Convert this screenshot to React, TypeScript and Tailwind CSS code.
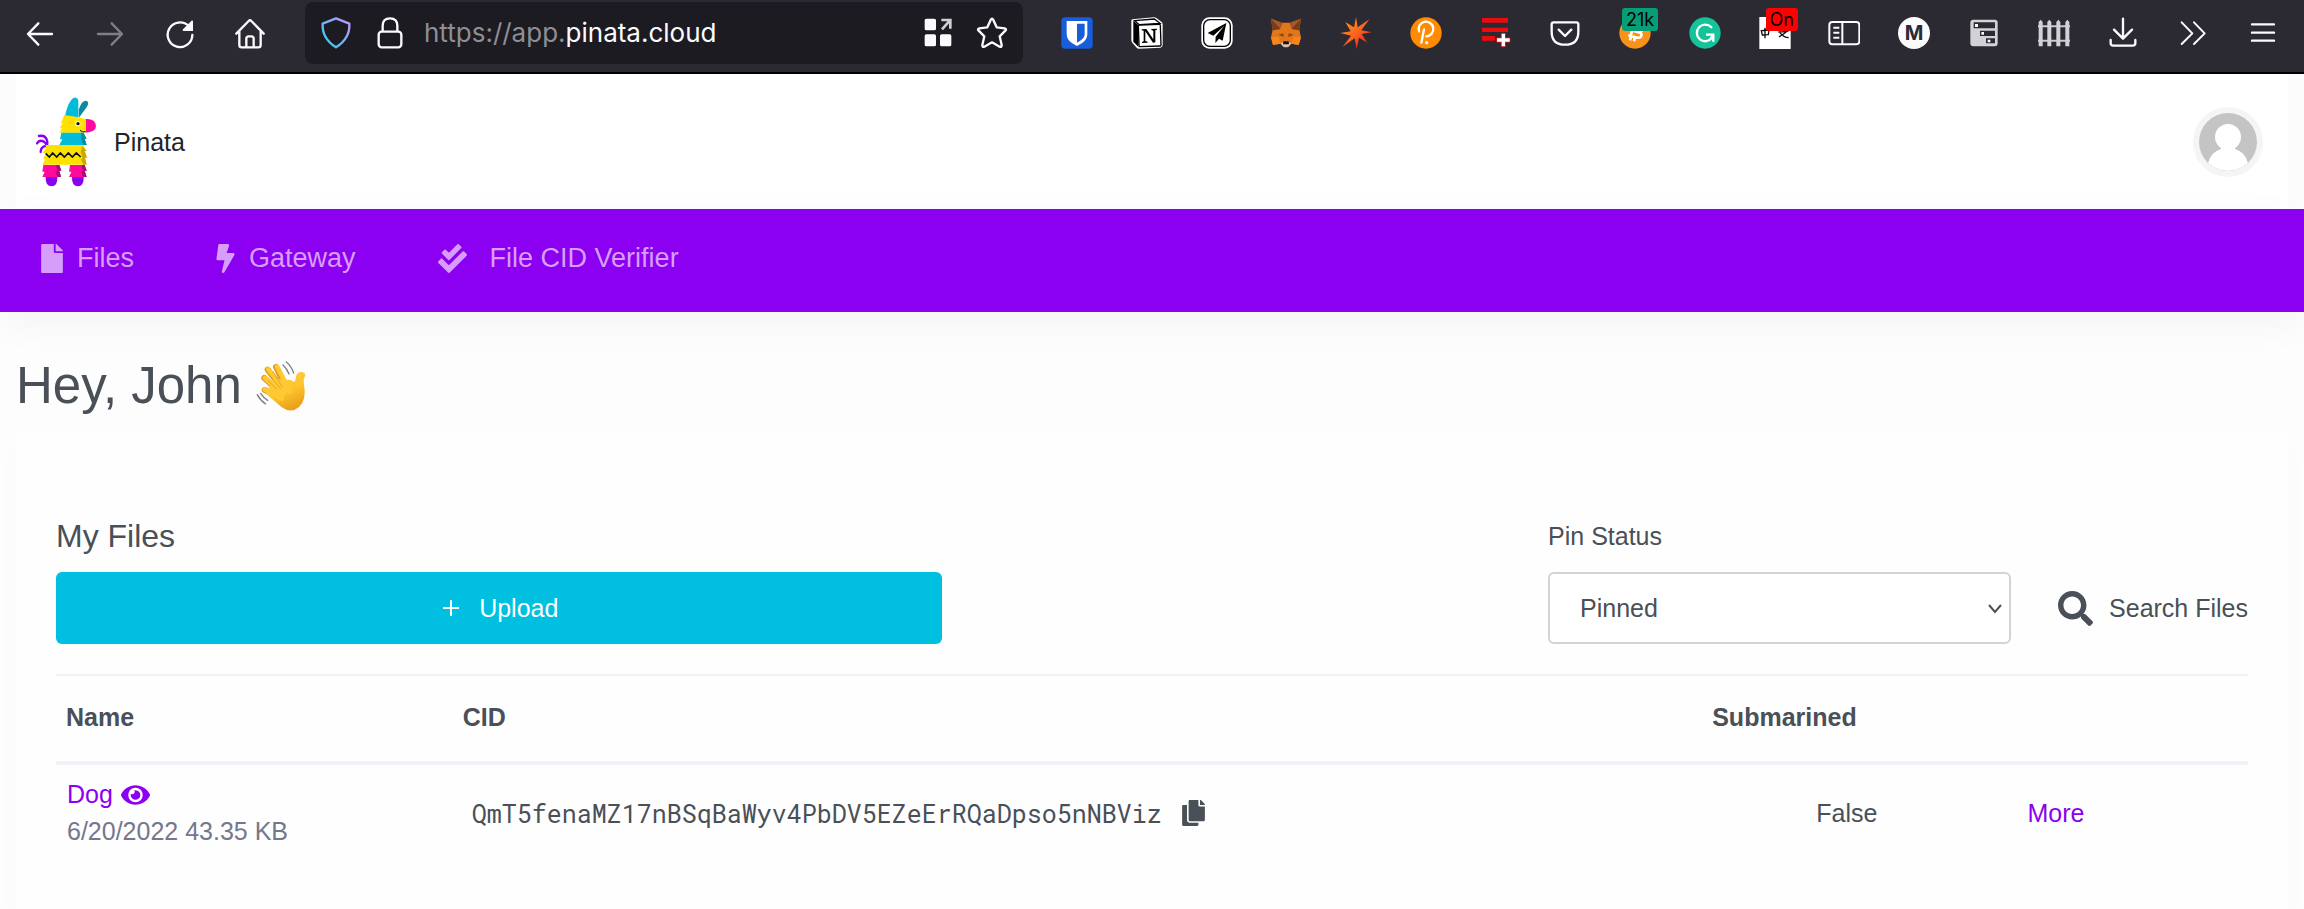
import type { ReactNode } from "react";
import { FaBolt, FaCheckDouble, FaCopy, FaEye, FaFile, FaSearch } from "react-icons/fa";

type IconProps = { children: ReactNode; box?: string };

function Icon({ children, box = "0 0 96 96" }: IconProps) {
  return (
    <svg viewBox={box} className="size-8 shrink-0" fill="none" aria-hidden="true">
      {children}
    </svg>
  );
}

function Line({ d, color = "#fbfbfe", width = 7 }: { d: string; color?: string; width?: number }) {
  return <path d={d} stroke={color} strokeWidth={width} strokeLinecap="round" strokeLinejoin="round" />;
}

const navButtons: { label: string; icon: ReactNode }[] = [
  { label: "Back", icon: <Icon><Line d="M84 51H13M43 19L12 51L43 83" /></Icon> },
  { label: "Forward", icon: <Icon><Line color="#807f86" d="M12 51H83M53 19L84 51L53 83" /></Icon> },
  {
    label: "Reload",
    icon: (
      <Icon>
        <Line d="M74 27A37 37 0 1 0 85 54" />
        <path d="M87 13V42H59C56 42 55 39 57 37L82 12C84 10 87 10 87 13Z" fill="#fbfbfe" />
      </Icon>
    ),
  },
  {
    label: "Home",
    icon: (
      <Icon>
        <Line d="M7 50L44 12Q48 8 52 12L89 50M16 42V84Q16 91 23 91H73Q80 91 80 84V42M37 90V65Q37 58 44 58H52Q59 58 59 65V90" />
      </Icon>
    ),
  },
];

const extensions: { label: string; icon: ReactNode; badge?: string; badgeClass?: string }[] = [
  {
    label: "Bitwarden",
    icon: (
      <Icon>
        <rect x="1" y="1" width="94" height="94" rx="12" fill="#175ddc" />
        <path d="M17 12H79V51C79 69 65 78 48 87C31 78 17 69 17 51Z" fill="#fff" />
        <path d="M48 20H71V51C71 63 60 70 48 77Z" fill="#175ddc" />
      </Icon>
    ),
  },
  {
    label: "Notion",
    icon: (
      <Icon>
        <path d="M4 7L69 1Q73 1 76 3L92 15Q95 18 95 22V84Q95 91 88 92L24 95Q19 95 17 92L4 77Q1 74 1 69V12Q1 8 4 7Z" fill="#fff" />
        <path d="M7 11L22 24V89L7 74Z" fill="#000" />
        <path d="M11 11L70 6L87 19L25 23Z" stroke="#000" strokeWidth="4" />
        <rect x="23" y="23" width="66" height="65" rx="3" stroke="#000" strokeWidth="4" transform="rotate(-2 56 55)" />
        <path d="M32 37L46 36L67 67V41L61 39V36L78 35V38L73 40V76L66 77L43 43V72L50 74V77L33 78V75L38 73V41L32 40Z" fill="#000" />
      </Icon>
    ),
  },
  {
    label: "Paper plane",
    icon: (
      <Icon>
        <rect x="1" y="1" width="94" height="94" rx="24" fill="#fff" />
        <rect x="8" y="8" width="80" height="80" rx="18" fill="#fff" stroke="#000" strokeWidth="4" />
        <path d="M76 18L20 48L37 56L70 26L44 59L43 78L54 65L65 71Z" fill="#000" />
      </Icon>
    ),
  },
  {
    label: "MetaMask",
    icon: (
      <Icon>
        <path d="M3 5L35 17H60L93 5L88 39L93 61L86 84L64 80L54 90H41L31 80L9 84L3 61L8 39Z" fill="#e2761b" />
        <path d="M3 5L37 18L29 37L8 40Z" fill="#763d16" />
        <path d="M93 5L59 18L67 37L88 40Z" fill="#763d16" />
        <path d="M3 5L35 17L30 34Z" fill="#a9572b" />
        <path d="M93 5L61 17L66 34Z" fill="#a9572b" />
        <path d="M3 61L26 59L31 80L9 84ZM93 61L70 59L65 80L86 84Z" fill="#f6851b" />
        <path d="M25 53L40 49L41 60ZM71 53L56 49L55 60Z" fill="#8a4519" />
        <path d="M32 79L42 74H54L64 79L56 89Q48 92 40 89Z" fill="#d7c1b3" />
        <path d="M40 73H56L57 82H39Z" fill="#161616" />
      </Icon>
    ),
  },
  {
    label: "Spark",
    icon: (
      <Icon>
        <defs>
          <linearGradient id="spark" x1="10" y1="10" x2="80" y2="85" gradientUnits="userSpaceOnUse">
            <stop stopColor="#ff9a1f" />
            <stop offset="0.6" stopColor="#fb5b1d" />
            <stop offset="1" stopColor="#e0201b" />
          </linearGradient>
        </defs>
        <path d="M48 0L53 31L88 7L64 40L95 46L65 51L82 77L57 62L50 96L44 64L8 89L33 56L1 48L32 43L16 15L42 31Z" fill="url(#spark)" />
      </Icon>
    ),
  },
  {
    label: "Polkadot",
    icon: (
      <Icon>
        <circle cx="48" cy="48" r="47" fill="#ff8c00" />
        <Line color="#fff" d="M27 43A22 22 0 1 1 49 58M42 37L34 77" />
        <circle cx="50" cy="77" r="5" fill="#fff" />
      </Icon>
    ),
  },
  {
    label: "Add to list",
    icon: (
      <Icon>
        <path d="M6 3H84V17H6ZM6 32H84V45H6ZM6 57H45V71H6Z" fill="#e90c0c" />
        <path d="M70 48V90M49 69H91" stroke="#e90c0c" strokeWidth="15" />
        <path d="M70 50V88M51 69H89" stroke="#fff" strokeWidth="10" />
      </Icon>
    ),
  },
  {
    label: "Pocket",
    icon: <Icon><Line d="M14 16H82Q88 16 88 22V44Q88 83 48 83Q8 83 8 44V22Q8 16 14 16ZM29 38L48 57L67 38" /></Icon>,
  },
  {
    label: "Bitcoin",
    badge: "21k",
    badgeClass: "left-[3px] bg-[#059e76]",
    icon: (
      <Icon>
        <circle cx="48" cy="48" r="47" fill="#f7931a" />
        <path d="M34 22L61 29C72 32 71 43 61 46C71 50 69 64 55 62L28 55M44 26L35 57M45 42L61 46M42 14L39 25M54 17L51 28M36 57L33 70M48 60L45 73" stroke="#fff" strokeWidth="8" />
      </Icon>
    ),
  },
  {
    label: "Grammarly",
    icon: (
      <Icon>
        <circle cx="48" cy="48" r="47" fill="#15c39a" />
        <path d="M67 31A25 25 0 1 0 69 62" stroke="#fff" strokeWidth="7" strokeLinecap="round" />
        <path d="M51 53H73V74M73 53L64 66" stroke="#fff" strokeWidth="7" />
      </Icon>
    ),
  },
  {
    label: "Chinese dictionary",
    badge: "On",
    badgeClass: "left-[7px] bg-[#ff0000]",
    icon: (
      <Icon>
        <rect x="1" width="94" height="96" fill="#fff" />
        <path d="M7 41L30 39L28 53L10 54ZM18 32V64M58 45L88 43M72 36L74 43M82 45L60 60M63 47Q74 62 89 62" stroke="#111" strokeWidth="4" />
      </Icon>
    ),
  },
  {
    label: "Sidebar",
    icon: (
      <Icon>
        <rect x="4" y="15" width="90" height="67" rx="9" stroke="#fbfbfe" strokeWidth="6" />
        <path d="M43 15V82M16 32H34M16 47H34M16 62H34" stroke="#fbfbfe" strokeWidth="6" />
      </Icon>
    ),
  },
  {
    label: "Momentum",
    icon: (
      <span className="flex size-8 items-center justify-center rounded-full bg-[#fbfbfe] text-[20px] leading-8 font-bold text-[#2b2a33]">
        M
      </span>
    ),
  },
  {
    label: "Containers",
    icon: (
      <Icon>
        <rect x="7" y="8" width="82" height="80" rx="9" fill="#d2d2d6" />
        <path d="M17 16H81V34H17ZM36 41H81V57H36ZM54 64H81V79H54Z" fill="#2b2a33" />
        <path d="M21 21H30V30H21ZM40 45H48V53H40ZM59 68H67V76H59Z" fill="#fbfbfe" />
      </Icon>
    ),
  },
  {
    label: "Fence",
    icon: (
      <Icon>
        <path d="M0 28H96M0 71H96" stroke="#c9c9cd" strokeWidth="6" />
        <path d="M2 88V15L8 8L14 15V88ZM28 88V15L34 8L40 15V88ZM55 88V15L61 8L67 15V88ZM82 88V15L88 8L94 15V88Z" fill="#d2d2d6" />
      </Icon>
    ),
  },
  {
    label: "Downloads",
    icon: <Icon><Line d="M48 5V61M21 38L48 65L75 38M11 69V78Q11 86 19 86H77Q85 86 85 78V69" /></Icon>,
  },
  {
    label: "More tools",
    icon: <Icon><Line width={6} d="M14 16L46 49L14 81M51 16L83 49L51 81" /></Icon>,
  },
  {
    label: "Menu",
    icon: <Icon><Line d="M15 22H81M15 47H81M15 71H81" /></Icon>,
  },
];

function BrowserBar() {
  return (
    <div className="flex h-[74px] shrink-0 items-center border-b-2 border-black bg-[#2b2a33] pt-[2px] pr-[25px] pb-[8px] pl-6 font-['Inter',sans-serif]">
      <div className="flex gap-[38px]">
        {navButtons.map((b) => (
          <button key={b.label} type="button" aria-label={b.label}>
            {b.icon}
          </button>
        ))}
      </div>
      <div className="ml-[39px] flex h-[62px] w-[718px] shrink-0 items-center rounded-lg bg-[#1c1b22] px-[15px]">
        <Icon>
          <defs>
            <linearGradient id="shield" x1="10" y1="80" x2="80" y2="20" gradientUnits="userSpaceOnUse">
              <stop stopColor="#2fd0f5" />
              <stop offset="1" stopColor="#b39bf8" />
            </linearGradient>
          </defs>
          <path d="M48 4L88 20Q91 64 48 91Q5 64 8 20Z" stroke="url(#shield)" strokeWidth="7" strokeLinejoin="round" />
        </Icon>
        <span className="ml-[22px] flex">
          <Icon>
            <rect x="14" y="44" width="68" height="47" rx="9" stroke="#fbfbfe" strokeWidth="7" />
            <path d="M26 44V26Q26 4 48 4Q70 4 70 26V44" stroke="#fbfbfe" strokeWidth="7" />
          </Icon>
        </span>
        <p className="ml-[18px] flex-1 text-[26px] leading-8 text-[#8f8e96]">
          https://app.<span className="text-[#fbfbfe]">pinata.cloud</span>
        </p>
        <button type="button" aria-label="Page actions">
          <Icon>
            <path d="M8 10Q8 5 13 5H37Q42 5 42 10V35Q42 40 37 40H13Q8 40 8 35ZM8 57Q8 52 13 52H37Q42 52 42 57V83Q42 88 37 88H13Q8 88 8 83ZM54 57Q54 52 59 52H83Q88 52 88 57V83Q88 88 83 88H59Q54 88 54 83Z" fill="#fbfbfe" />
            <path d="M58 9H85V35M84 10L60 37" stroke="#cfcfd3" strokeWidth="8" />
          </Icon>
        </button>
        <button type="button" aria-label="Bookmark this page" className="ml-[22px]">
          <Icon>
            <Line d="M48 5Q50 5 52 9L62 31L86 34Q93 36 88 41L71 58L77 84Q77 92 71 89L48 76L25 89Q19 92 19 84L25 58L8 41Q3 36 10 34L34 31L44 9Q46 5 48 5Z" />
          </Icon>
        </button>
      </div>
      <div className="ml-[38px] flex flex-1 justify-between">
        {extensions.map((e) => (
          <button key={e.label} type="button" aria-label={e.label} className="relative">
            {e.icon}
            {e.badge && (
              <span className={`absolute -top-[9px] rounded-[3px] px-[4px] text-[18px] leading-[23px] text-black ${e.badgeClass}`}>
                {e.badge}
              </span>
            )}
          </button>
        ))}
      </div>
    </div>
  );
}

function PinataLogo() {
  return (
    <svg viewBox="48 53 180 270" className="h-[90px] w-[60px]" fill="none" aria-hidden="true">
      <path d="M57 170Q74 166 80 180Q84 190 80 202M51 192Q58 180 72 187Q79 191 80 198M62 218Q62 203 76 200" stroke="#8a00f0" strokeWidth="7" strokeLinecap="round" />
      <path d="M176 92Q184 64 198 64Q210 66 200 84L176 116Z" fill="#0b8ba0" />
      <path d="M135 110Q144 66 160 56Q170 51 175 62V114Z" fill="#00bcd9" />
      <path d="M197 119Q226 117 228 140Q227 158 197 160Z" fill="#ff0a9c" />
      <path d="M133 107L175 114L197 120V160H118L127 147H119L128 131H123Z" fill="#ffe100" />
      <path d="M180 153Q187 160 197 157" stroke="#111" strokeWidth="3" />
      <circle cx="173" cy="133" r="8" fill="#fff" />
      <circle cx="174" cy="133" r="5" fill="#111" />
      <path d="M124 160H190L200 178H194L200 197H118L127 180H120Z" fill="#00bcd9" />
      <path d="M184 160H190L200 178H194L200 197H190L184 180Z" fill="#0b8ba0" />
      <path d="M77 197H190L200 215H194L201 235H195L200 256H67L76 240H69L79 221H68L78 207Z" fill="#ffe100" />
      <path d="M186 200L200 215H194L201 235H195L200 256H190L182 238H188L182 218Z" fill="#c9a800" />
      <path d="M77 222L88 233L98 221L110 233L121 221L133 233L145 221L157 233L169 221L182 233" stroke="#111" strokeWidth="5" />
      <path d="M70 257H118L124 274H118L123 293H67L74 277H67ZM150 257H194L200 274H194L200 293H147L154 277H147Z" fill="#ff0a9c" />
      <path d="M108 257H118L124 274H118L123 293H112L106 275H112ZM184 257H194L200 274H194L200 293H189L183 275H189Z" fill="#a80d76" />
      <path d="M77 293H112Q113 321 95 321Q76 321 77 293ZM156 293H191Q192 321 174 321Q155 321 156 293Z" fill="#8a00f0" />
    </svg>
  );
}

function WavingHand() {
  return (
    <svg viewBox="45 55 150 150" className="size-[50px]" fill="none" role="img" aria-label="Waving hand">
      <defs>
        <linearGradient id="hand" x1="90" y1="70" x2="150" y2="205" gradientUnits="userSpaceOnUse">
          <stop stopColor="#ffd24d" />
          <stop offset="0.6" stopColor="#fdc42c" />
          <stop offset="1" stopColor="#ea9d17" />
        </linearGradient>
      </defs>
      <path d="M143 150L105 73M128 142L80 81M120 150L70 106M122 164L71 142" stroke="#e39a1b" strokeWidth="18" strokeLinecap="round" />
      <path d="M96 108L150 112Q162 124 164 108Q164 91 178 88Q192 87 193 97L188 112Q189 128 191 144Q193 188 160 202Q140 207 122 194L76 154Z" fill="url(#hand)" />
      <path d="M147 146L108 72M134 146L82 80M126 154L72 106M122 168L72 141" stroke="#ffc931" strokeWidth="14" strokeLinecap="round" />
      <path d="M96 87L124 133M84 96L118 137M82 115L108 140" stroke="#d98f1a" strokeWidth="2" strokeLinecap="round" />
      <path d="M126 67Q138 78 144 94M136 58Q151 70 158 91M59 152Q66 164 80 173M49 156Q58 174 74 184" stroke="#7d8187" strokeWidth="4" strokeLinecap="round" />
    </svg>
  );
}

function Header() {
  return (
    <header className="bg-[#fcfcfc] px-4">
      <div className="flex items-center justify-between bg-white pt-[23px] pr-[25px] pb-[22px] pl-[20px]">
        <a href="#home" className="flex items-center gap-[18px] text-[25px] leading-[37px] text-[#212529]">
          <PinataLogo />
          Pinata
        </a>
        <button type="button" aria-label="Account" className="rounded-full bg-[#f5f5f5] p-[6px]">
          <svg viewBox="0 0 58 58" className="size-[58px] rounded-full" aria-hidden="true">
            <rect width="58" height="58" fill="#c4c4c4" />
            <ellipse cx="29" cy="24" rx="13" ry="13" fill="#fff" />
            <path d="M22 32H36V36Q46 39 49 50Q40 58 29 58Q18 58 9 50Q12 39 22 36Z" fill="#fff" />
          </svg>
        </button>
      </div>
    </header>
  );
}

function MainNav() {
  const link = "flex items-center text-[27px] leading-[42px] text-[#d69efa]";
  return (
    <nav className="flex bg-[#8b00f0] pt-7 pb-[33px] pl-[41px] shadow-[0_12px_40px_rgba(18,38,63,0.04)]">
      <a href="#files" className={`${link} gap-[14px]`}>
        <FaFile className="h-[29px] w-[22px]" />
        Files
      </a>
      <a href="#gateway" className={`${link} ml-[82px] gap-[14px]`}>
        <FaBolt className="h-[29px] w-[19px]" />
        Gateway
      </a>
      <a href="#verifier" className={`${link} ml-[82px] gap-[23px]`}>
        <FaCheckDouble className="size-[29px]" />
        File CID Verifier
      </a>
    </nav>
  );
}

const files = [
  {
    name: "Dog",
    date: "6/20/2022",
    size: "43.35 KB",
    cid: "QmT5fenaMZ17nBSqBaWyv4PbDV5EZeErRQaDpso5nNBViz",
    submarined: "False",
  },
];

function FilesCard() {
  return (
    <section className="flex-1 bg-[#fefefe] px-10 pt-[85px] pb-11 shadow-[0_12px_36px_rgba(18,38,63,0.015)]">
      <div className="flex items-end justify-between">
        <div className="flex w-[40.4%] flex-col gap-4">
          <h2 className="text-[32px] leading-[40px]">My Files</h2>
          <button type="button" className="flex h-[72px] items-center justify-center gap-5 rounded-md bg-[#00bfe1] pl-1 text-white">
            <svg viewBox="0 0 16 16" className="size-4" aria-hidden="true">
              <path d="M8 0V16M0 8H16" stroke="currentColor" strokeWidth="2" />
            </svg>
            Upload
          </button>
        </div>
        <div className="flex items-end gap-[47px]">
          <div className="flex w-[463px] flex-col gap-4">
            <label htmlFor="pin-status" className="leading-[40px]">
              Pin Status
            </label>
            <div className="relative">
              <select id="pin-status" className="h-[72px] w-full appearance-none rounded-md border-2 border-[#ced4da] bg-white px-[30px]">
                <option>Pinned</option>
                <option>Unpinned</option>
              </select>
              <svg viewBox="0 0 14 10" className="pointer-events-none absolute top-8 right-[9px] h-[10px] w-[14px]" fill="none" aria-hidden="true">
                <path d="M1 1L7 8L13 1" stroke="currentColor" strokeWidth="2" />
              </svg>
            </div>
          </div>
          <button type="button" className="flex h-[72px] items-center gap-4">
            <FaSearch className="size-[35px]" />
            Search Files
          </button>
        </div>
      </div>
      <table className="mt-[30px] w-full table-fixed border-t-2 border-[#eff2f7] text-left">
        <thead>
          <tr className="border-b-4 border-[#eff2f7]">
            <th className="w-[18.1%] px-[10px] pt-[23px] pb-[25px]">Name</th>
            <th className="w-[57%] px-[10px] pt-[23px] pb-[25px]">CID</th>
            <th className="w-[13.2%] px-[10px] pt-[23px] pb-[25px]">Submarined</th>
            <th className="px-[10px]" aria-label="Actions" />
          </tr>
        </thead>
        <tbody>
          {files.map((f) => (
            <tr key={f.cid}>
              <td className="p-[11px]">
                <a href="#dog" className="flex items-center gap-2 text-[#8b00f0]">
                  {f.name}
                  <FaEye className="h-[26px] w-[29px]" />
                </a>
                <p className="text-[#74788d]">
                  {f.date} {f.size}
                </p>
              </td>
              <td className="px-[19px]">
                <div className="flex items-center gap-5">
                  <span className="font-['Roboto_Mono','Liberation_Mono',monospace]">{f.cid}</span>
                  <button type="button" aria-label="Copy CID">
                    <FaCopy className="h-[26px] w-[23px]" />
                  </button>
                </div>
              </td>
              <td className="text-center">{f.submarined}</td>
              <td className="pl-9">
                <button type="button" className="text-[#8b00f0]">
                  More
                </button>
              </td>
            </tr>
          ))}
        </tbody>
      </table>
    </section>
  );
}

export default function App() {
  return (
    <div className="flex min-h-screen flex-col bg-[#fdfdfd] font-['Liberation_Sans',Arial,sans-serif] text-[25px] leading-[37px] text-[#495057]">
      <BrowserBar />
      <Header />
      <MainNav />
      <main className="flex flex-1 flex-col px-4 pt-11">
        <h1 className="mb-[15px] flex items-center gap-[14px] text-[51px] leading-[60px]">
          Hey, John
          <WavingHand />
        </h1>
        <FilesCard />
      </main>
    </div>
  );
}
